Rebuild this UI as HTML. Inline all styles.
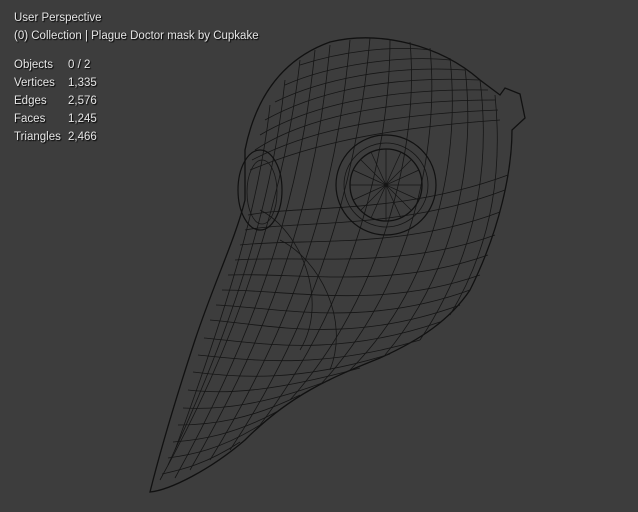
<!DOCTYPE html>
<html><head><style>
body{margin:0;width:638px;height:512px;background:#3d3d3d;overflow:hidden;position:relative;font-family:"Liberation Sans","DejaVu Sans",sans-serif}
.t{position:absolute;color:#e6e6e6;font-size:11.5px;text-shadow:1px 1px 1px #000;white-space:pre;line-height:18px}
</style></head><body>
<svg width="638" height="512" style="position:absolute;left:0;top:0" fill="none" stroke="#151515" stroke-width="0.8">
<path d="M245 150 C255 100 280 60 330 42 C380 30 440 45 480 80 L500 95 L505 88 L520 94 L525 118 L512 130 C512 170 500 230 470 290 C450 320 420 340 380 358 C330 378 290 395 245 440 C210 470 170 490 150 492 C158 460 172 410 195 340 C215 280 235 240 245 200 Z" stroke="#111" stroke-width="1.3"/>
<g>
<path d="M250 170 C300 150 360 130 500 120"/>
<path d="M252 160 C300 135 370 115 498 110"/>
<path d="M255 150 C300 120 380 100 495 100"/>
<path d="M260 135 C305 108 380 88 488 90"/>
<path d="M265 120 C310 95 380 75 480 80"/>
<path d="M275 102 C320 80 390 65 465 70"/>
<path d="M285 85 C330 65 400 55 450 60"/>
<path d="M300 65 C340 52 390 45 430 50"/>
<path d="M248 215 C300 205 400 215 508 175"/>
<path d="M245 230 C300 220 400 230 505 190"/>
<path d="M240 245 C300 238 400 250 500 212"/>
<path d="M235 260 C300 255 400 270 495 235"/>
<path d="M228 275 C295 272 390 290 488 255"/>
<path d="M222 290 C290 290 380 310 480 275"/>
<path d="M216 305 C280 308 365 328 470 290"/>
<path d="M210 320 C270 325 350 345 460 305"/>
<path d="M204 338 C260 343 335 358 440 322"/>
<path d="M198 355 C250 360 320 370 420 340"/>
<path d="M193 372 C240 378 300 382 390 354"/>
<path d="M188 390 C230 395 280 390 360 368"/>
<path d="M183 408 C220 410 265 405 330 380"/>
<path d="M178 425 C210 425 250 420 300 395"/>
<path d="M173 442 C200 440 235 435 280 410"/>
<path d="M168 458 C190 455 220 450 260 425"/>
<path d="M162 474 C180 470 205 465 240 442"/>
<path d="M300 60 C290 150 260 300 160 480"/>
<path d="M315 50 C305 150 280 290 175 478"/>
<path d="M330 45 C320 150 300 280 190 470"/>
<path d="M350 40 C340 150 315 290 210 460"/>
<path d="M370 38 C360 150 330 300 230 450"/>
<path d="M390 39 C390 150 355 300 260 425"/>
<path d="M410 42 C420 150 380 300 290 400"/>
<path d="M430 48 C440 150 410 290 320 385"/>
<path d="M450 58 C460 150 440 280 350 370"/>
<path d="M465 68 C475 155 460 265 385 355"/>
<path d="M480 80 C490 160 480 250 420 340"/>
<path d="M495 95 C502 165 495 240 450 315"/>
<path d="M270 105 C260 200 230 300 175 450"/>
<path d="M285 80 C275 180 245 300 168 465"/>
<path d="M260 210 C300 230 330 300 300 350"/>
<path d="M280 240 C320 260 350 320 330 370"/>
</g>
<circle cx="386" cy="185" r="50" stroke="#111" stroke-width="1.2"/>
<circle cx="386" cy="185" r="42"/>
<circle cx="386" cy="185" r="36" stroke="#111" stroke-width="1.3"/>
<g stroke-width="0.7">
<path d="M350 185H422M386 149V221M361 160L411 210M411 160L361 210M353 170L419 200M353 200L419 170M371 152L401 218M401 152L371 218"/>
</g>
<ellipse cx="260" cy="190" rx="22" ry="40" stroke="#111" stroke-width="1.2"/>
<ellipse cx="262" cy="192" rx="15" ry="32"/>
</svg>
<div class="t" style="left:14px;top:9px">User Perspective
(0) Collection | Plague Doctor mask by Cupkake</div>
<div class="t" style="left:14px;top:56px">Objects
Vertices
Edges
Faces
Triangles</div>
<div class="t" style="left:68px;top:56px">0 / 2
1,335
2,576
1,245
2,466</div>
</body></html>
